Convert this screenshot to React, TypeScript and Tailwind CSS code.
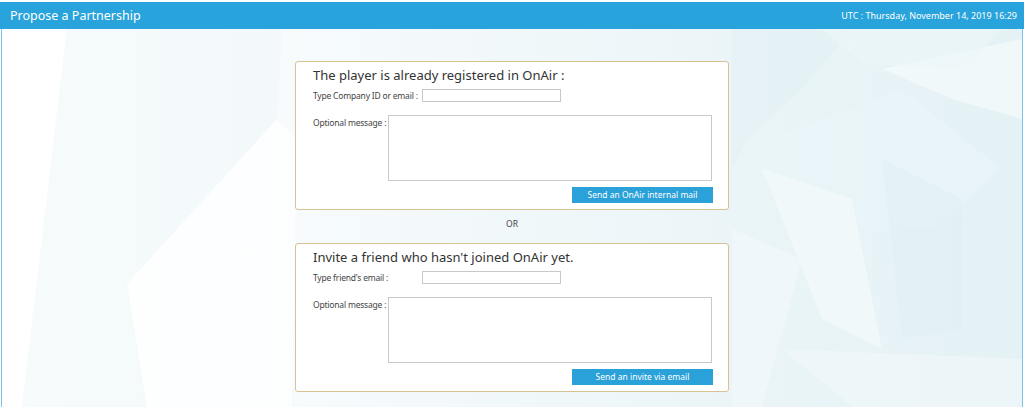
import React from "react";

function Background() {
  return (
    <svg
      className="absolute inset-0 w-full h-full"
      viewBox="0 0 1020 378"
      preserveAspectRatio="none"
    >
      <defs>
        <linearGradient id="bg" x1="0" y1="0" x2="1" y2="0">
          <stop offset="0" stopColor="#fdfefe" />
          <stop offset="0.35" stopColor="#f5fafc" />
          <stop offset="0.7" stopColor="#ebf5f8" />
          <stop offset="1" stopColor="#e4f1f5" />
        </linearGradient>
      </defs>
      <rect x="0" y="0" width="1020" height="378" fill="url(#bg)" />
      <polygon points="0,0 65,0 20,378 0,378" fill="#ffffff" opacity="0.9" />
      <polygon points="65,0 280,0 275,90 125,255 145,378 20,378" fill="#f0f8fa" opacity="0.5" />
      <polygon points="275,90 295,110 290,378 145,378 125,255" fill="#ffffff" opacity="0.7" />
      <polygon points="730,0 850,0 800,60 745,110 730,140" fill="#e2f0f4" opacity="0.5" />
      <polygon points="740,120 900,60 1000,140 930,200 800,190" fill="#eaf5f8" opacity="0.6" />
      <polygon points="760,140 850,170 880,320 820,290" fill="#f4fafb" opacity="0.7" />
      <polygon points="880,40 1020,10 1020,90 950,70" fill="#f5fbfc" opacity="0.7" />
      <polygon points="880,130 960,170 960,300 900,310" fill="#dfeef2" opacity="0.4" />
      <polygon points="780,320 1020,330 1020,378 850,378" fill="#eff7f9" opacity="0.7" />
      <polygon points="960,180 1020,200 1020,300 970,260" fill="#e4f1f5" opacity="0.6" />
      <polygon points="820,0 1000,0 960,40 860,35" fill="#ecf6f8" opacity="0.6" />
      <polygon points="730,200 800,230 760,378 730,378" fill="#f3f9fb" opacity="0.6" />
    </svg>
  );
}

function Panel({
  title,
  label,
  button,
}: {
  title: string;
  label: string;
  button: string;
}) {
  return (
    <div className="w-[434px] bg-white border border-[#d6c293] rounded-[3px] pl-[17px] pr-[15px] pt-[4px] pb-[6px] flex flex-col">
      <div className="text-[13px] leading-[18px] text-[#333333] whitespace-nowrap">
        {title}
      </div>
      <div className="flex items-center mt-[5px]">
        <div className="w-[109px] shrink-0 whitespace-nowrap text-[8.5px] tracking-[-0.2px] leading-[13px] text-[#444444]">
          {label}
        </div>
        <div className="w-[139px] h-[13px] border border-[#c9c9c4] bg-white" />
      </div>
      <div className="flex items-start mt-[13px]">
        <div className="w-[75px] shrink-0 whitespace-nowrap text-[8.5px] tracking-[-0.2px] leading-[13px] text-[#444444] pt-[1px]">
          Optional message :
        </div>
        <div className="w-[324px] h-[66px] border border-[#c9c9c9] bg-white" />
      </div>
      <div className="flex justify-end mt-[6px]">
        <div className="w-[141px] h-[16px] bg-[#2ba1d9] text-white text-[8.5px] leading-[16px] text-center whitespace-nowrap">
          {button}
        </div>
      </div>
    </div>
  );
}

export default function App() {
  return (
    <div
      className="w-[1024px] h-[407px] overflow-hidden bg-white flex flex-col"
      style={{ fontFamily: '"Noto Sans", "Open Sans", sans-serif' }}
    >
      <div className="mt-[2px] h-[27px] bg-[#28a3db] flex items-center justify-between pl-[10px] pr-[7px]">
        <div className="text-white text-[12.5px] leading-[16px]">
          Propose a Partnership
        </div>
        <div className="text-white text-[9px] leading-[12px]">
          UTC : Thursday, November 14, 2019 16:29
        </div>
      </div>
      <div className="relative flex-1 mx-[1px] border-l border-r border-[#7cc4e6]">
        <Background />
        <div className="relative flex flex-col items-center pt-[32px]">
          <Panel
            title="The player is already registered in OnAir :"
            label="Type Company ID or email :"
            button="Send an OnAir internal mail"
          />
          <div className="h-[33px] pb-[4px] flex items-center justify-center text-[8.5px] text-[#444444]">
            OR
          </div>
          <Panel
            title="Invite a friend who hasn't joined OnAir yet."
            label="Type friend's email :"
            button="Send an invite via email"
          />
        </div>
      </div>
    </div>
  );
}
